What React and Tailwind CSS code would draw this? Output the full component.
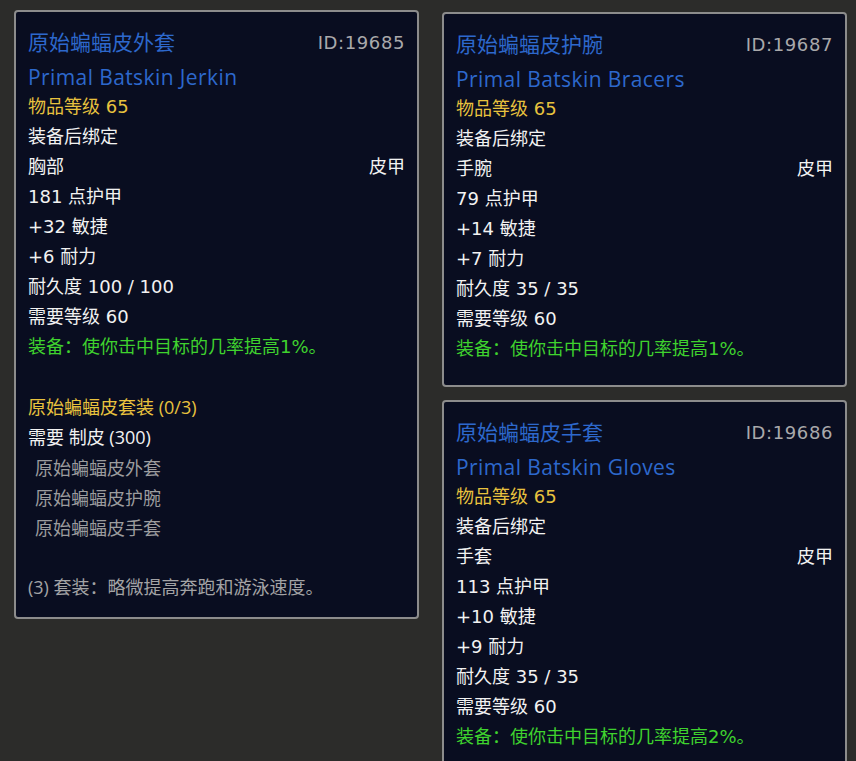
import React from 'react'

const body = { fontFamily: '"DejaVu Sans", "Noto Sans CJK SC", sans-serif' }
const cjk = { fontFamily: '"Noto Sans CJK SC", sans-serif' }
const latin = { fontFamily: '"Open Sans", "Noto Sans CJK SC", sans-serif' }

function Line({ children, className = '', style = body }) {
    return (
        <div className={`h-[30px] leading-[30px] text-[18px] whitespace-nowrap ${className}`} style={style}>
            {children}
        </div>
    )
}

function ItemCard({ cn, en, id, slot, armor, agi, sta, dur, hit, className = '', children }) {
    return (
        <div className={`w-[405px] rounded-[4px] border-2 border-[#8c8c8c] bg-[#090d20] px-[12px] pt-[13px] ${className}`}>
            <div className="flex h-[34px] items-center justify-between">
                <span className="text-[21px] text-[#2d68cc]" style={cjk}>{cn}</span>
                <span className="text-[18px] tracking-[0.6px] text-[#a9a9ab]" style={body}>{id}</span>
            </div>
            <div className="mt-[3px] h-[30px] leading-[30px] text-[21px] tracking-[0.4px] text-[#2d68cc]" style={latin}>{en}</div>
            <Line className="text-[#e8c23e]">物品等级 65</Line>
            <Line className="text-[#f2f2f2]">装备后绑定</Line>
            <div className="flex justify-between">
                <Line className="text-[#f2f2f2]">{slot}</Line>
                <Line className="text-[#f2f2f2]">皮甲</Line>
            </div>
            <Line className="text-[#f2f2f2]">{armor} 点护甲</Line>
            <Line className="text-[#f2f2f2]">+{agi} 敏捷</Line>
            <Line className="text-[#f2f2f2]">+{sta} 耐力</Line>
            <Line className="text-[#f2f2f2]">耐久度 {dur} / {dur}</Line>
            <Line className="text-[#f2f2f2]">需要等级 60</Line>
            <Line className="text-[#3fd22e]">装备：使你击中目标的几率提高{hit}%。</Line>
            {children}
        </div>
    )
}

export default function App() {
    return (
        <div className="min-h-screen bg-[#2c2c2a] pl-[14px] pt-[10px]">
            <div className="flex items-start gap-[23px]">
                <ItemCard cn="原始蝙蝠皮外套" en="Primal Batskin Jerkin" id="ID:19685" slot="胸部"
                    armor="181" agi="32" sta="6" dur="100" hit="1" className="pb-[15px]">
                    <div className="h-[30px]" />
                    <Line className="text-[#e8c23e]" style={latin}>原始蝙蝠皮套装 (0/3)</Line>
                    <Line className="text-[#f2f2f2]" style={latin}>需要 制皮 (300)</Line>
                    <Line className="pl-[7px] text-[#9c9c9e]" style={cjk}>原始蝙蝠皮外套</Line>
                    <Line className="pl-[7px] text-[#9c9c9e]" style={cjk}>原始蝙蝠皮护腕</Line>
                    <Line className="pl-[7px] text-[#9c9c9e]" style={cjk}>原始蝙蝠皮手套</Line>
                    <div className="h-[30px]" />
                    <Line className="text-[#a3a3a5]" style={latin}>(3) 套装：略微提高奔跑和游泳速度。</Line>
                </ItemCard>

                <div className="mt-[2px] flex flex-col gap-[13px]">
                    <ItemCard cn="原始蝙蝠皮护腕" en="Primal Batskin Bracers" id="ID:19687" slot="手腕"
                        armor="79" agi="14" sta="7" dur="35" hit="1" className="pb-[21px]" />
                    <ItemCard cn="原始蝙蝠皮手套" en="Primal Batskin Gloves" id="ID:19686" slot="手套"
                        armor="113" agi="10" sta="9" dur="35" hit="2" className="pb-[16px]" />
                </div>
            </div>
        </div>
    )
}
